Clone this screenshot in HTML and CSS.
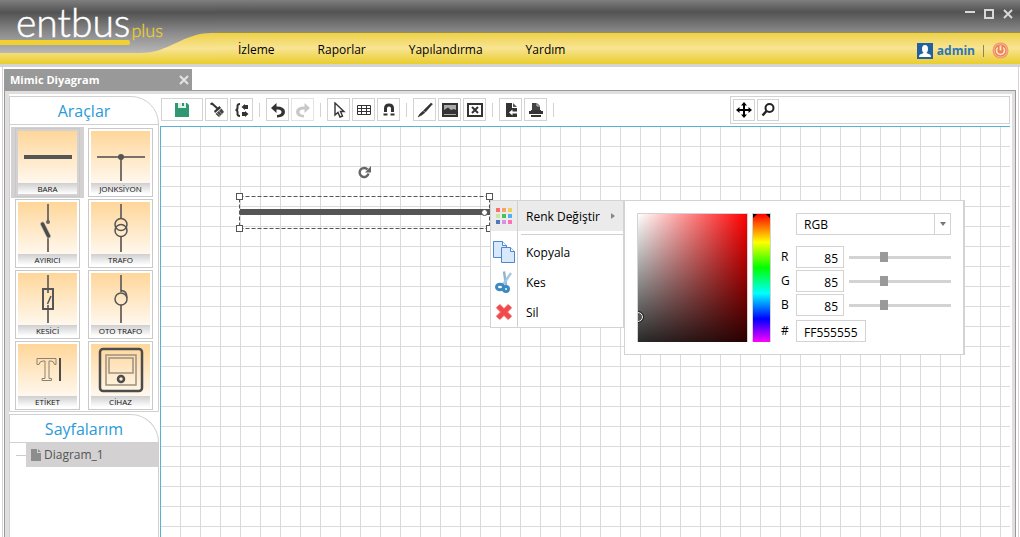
FILE: index.html
```html
<!DOCTYPE html>
<html lang="tr">
<head>
<meta charset="utf-8">
<title>entbus plus - Mimic Diyagram</title>
<link rel="stylesheet" href="styles.css">
</head>
<body>
<div class="app">
  <header class="header">
    <svg class="header-curve" width="216" height="64" viewBox="0 0 216 64" aria-hidden="true">
      <defs>
        <linearGradient id="steel" gradientUnits="userSpaceOnUse" x1="0" y1="0" x2="0" y2="54">
          <stop offset="0" stop-color="#7e7e7e"/><stop offset=".23" stop-color="#535353"/>
          <stop offset=".6" stop-color="#8a8a8a"/><stop offset="1" stop-color="#b9b9b9"/>
        </linearGradient>
        <linearGradient id="gold" gradientUnits="userSpaceOnUse" x1="0" y1="33" x2="0" y2="64">
          <stop offset="0" stop-color="#eed047"/><stop offset=".5" stop-color="#f8e494"/><stop offset="1" stop-color="#e9cd2c"/>
        </linearGradient>
      </defs>
      <path d="M0 53H140C170 53 182 33 212 33H216V64H0Z" fill="url(#gold)"/>
      <path d="M0 0H216V33H212C182 33 170 53 140 53H0Z" fill="url(#steel)"/>
    </svg>
    <div class="logo">
      <div class="logo-text"><span class="logo-name">entbus</span><span class="logo-plus">plus</span></div>
      <div class="logo-bar"></div>
    </div>
    <div class="header-main">
      <div class="window-buttons">
        <button aria-label="Simge durumuna küçült"><svg width="10" height="10"><path d="M0 3H10" stroke="#d8d8d8" stroke-width="2"/></svg></button>
        <button aria-label="Ekranı kapla"><svg width="10" height="10"><rect x="1" y="1" width="8" height="8" fill="none" stroke="#d8d8d8" stroke-width="2"/></svg></button>
        <button aria-label="Kapat"><svg width="10" height="10"><path d="M1 1L9 9M9 1L1 9" stroke="#d8d8d8" stroke-width="2"/></svg></button>
      </div>
      <div class="menu-row">
        <nav class="main-nav">
          <a href="#izleme">İzleme</a><a href="#raporlar">Raporlar</a><a href="#yapilandirma">Yapılandırma</a><a href="#yardim">Yardım</a>
        </nav>
        <div class="user">
          <a href="#admin" class="user-link">
            <svg width="16" height="16" viewBox="0 0 16 16"><rect width="16" height="16" fill="#2161a0"/><ellipse cx="8" cy="6" rx="3" ry="4" fill="#fff"/><path d="M6.500 8H9.500V10L13 11.500Q14 12 14 14H2Q2 12 3 11.500L6.500 10Z" fill="#fff"/></svg>
            admin</a>
          <span class="user-sep"></span>
          <button aria-label="Oturumu kapat"><svg width="17" height="17" viewBox="0 0 17 17"><circle cx="8.500" cy="8.500" r="8" fill="#f2956c"/><circle cx="8.500" cy="8.500" r="6.500" fill="#ee7f50" stroke="#f7b596"/><path d="M5.800 5.500A4 4 0 1 0 11.200 5.500" fill="none" stroke="#ffe8c8" stroke-width="1.600"/><path d="M8.500 3.500V8.500" stroke="#ffe8c8" stroke-width="1.800"/></svg></button>
        </div>
      </div>
    </div>
  </header>

  <div class="frame">
    <div class="tabs">
      <div class="tab"><span>Mimic Diyagram</span><button aria-label="Sekmeyi kapat"><svg width="10" height="10"><path d="M1 1L9 9M9 1L1 9" stroke="#e4e4e4" stroke-width="2"/></svg></button></div>
    </div>
    <div class="workspace">
      <aside class="sidebar">
        <section class="box">
          <h2>Araçlar</h2>
          <div class="tools">
            <button class="tool selected"><svg viewBox="0 0 59 52"><path d="M6 26H54" stroke="#555" stroke-width="4"/></svg><span>BARA</span></button>
            <button class="tool"><svg viewBox="0 0 59 52"><path d="M6 26H54M30 26V50" stroke="#77716a" stroke-width="2"/><circle cx="30" cy="26" r="3" fill="#555"/></svg><span>JONKSİYON</span></button>
            <button class="tool"><svg viewBox="0 0 59 52"><path d="M30 2V20M30 36V50" stroke="#77716a" stroke-width="2"/><circle cx="30" cy="20" r="2" fill="#666"/><path d="M24.500 22L30.500 34" stroke="#c9c3b8" stroke-width="5" stroke-linecap="round"/><path d="M24.500 22L30.500 34" stroke="#4c4c4c" stroke-width="3.500" stroke-linecap="round"/></svg><span>AYIRICI</span></button>
            <button class="tool"><svg viewBox="0 0 59 52" fill="none"><path d="M30 2V16M30 35V50" stroke="#77716a" stroke-width="2"/><circle cx="30" cy="22.500" r="6" stroke="#555" stroke-width="1.500"/><circle cx="30" cy="28.500" r="6" stroke="#555" stroke-width="1.500"/></svg><span>TRAFO</span></button>
            <button class="tool"><svg viewBox="0 0 59 52" fill="none"><path d="M30 2V20M30 32V50" stroke="#77716a" stroke-width="2"/><rect x="25" y="16" width="10" height="20" stroke="#555" stroke-width="2"/><path d="M33 23L29.500 31" stroke="#555" stroke-width="1.500"/></svg><span>KESİCİ</span></button>
            <button class="tool"><svg viewBox="0 0 59 52" fill="none"><path d="M30 2V19M30 32V50" stroke="#77716a" stroke-width="2"/><circle cx="30" cy="26" r="6" stroke="#555" stroke-width="1.500"/><path d="M30 17.500Q36 17.500 36 25" stroke="#555" stroke-width="1.500"/></svg><span>OTO TRAFO</span></button>
            <button class="tool"><svg viewBox="0 0 59 52" fill="none"><path d="M19 14.500H38V20.500H36.500Q36 17 33 17H31V34.500H33.500V36.500H24V34.500H27V17H25Q21.500 17 21 20.500H19Z" stroke="#8b8172"/><path d="M42 14V37" stroke="#4c4c4c" stroke-width="2"/></svg><span>ETİKET</span></button>
            <button class="tool"><svg viewBox="0 0 59 52" fill="none"><rect x="9" y="5" width="42" height="42" rx="3" stroke="#4c4c4c" stroke-width="2.500"/><rect x="15" y="11" width="30" height="30" stroke="#9b9181" stroke-width="1.500"/><rect x="18" y="14" width="24" height="15" stroke="#9b9181" stroke-width="1.500"/><circle cx="30" cy="35" r="3" stroke="#4c4c4c" stroke-width="2.500"/></svg><span>CİHAZ</span></button>
          </div>
        </section>
        <section class="box pages">
          <h2>Sayfalarım</h2>
          <div class="tree"><span class="tree-line"></span><a href="#diagram1" class="tree-item"><svg width="10" height="12"><path d="M0 0H6V4H10V12H0Z" fill="#8d8d8d"/><path d="M7 0L10 3H7Z" fill="#8d8d8d"/></svg>Diagram_1</a></div>
        </section>
      </aside>

      <main class="editor">
        <div class="toolbar">
          <div class="tool-strip">
            <button class="tb save" aria-label="Kaydet"><svg viewBox="0 0 16 16"><path d="M1 1H13L15 3V15H1Z" fill="#2f9872"/><path d="M4 1H12V6H4Z" fill="#dff1ea"/><path d="M8 1H10V4H8Z" fill="#2f9872"/></svg></button>
            <button class="tb" aria-label="Biçim fırçası"><svg viewBox="0 0 16 16"><path d="M1.500 2.500L3 1.500L8.500 6.500" fill="none" stroke="#333" stroke-width="2"/><path d="M5 9L10.500 4L12 6L6 11Z" fill="#333"/><path d="M6.500 12L12.500 6.500L15 10L10 15Z" fill="#444"/><path d="M8 11L11.500 14M10 9L13 12.500" stroke="#bbb" stroke-width=".7"/></svg></button>
            <button class="tb" aria-label="Kod yerleşimi"><svg viewBox="0 0 16 16"><path d="M6 2Q3.500 2 3.500 4V6Q3.500 8 1.500 8Q3.500 8 3.500 10V12Q3.500 14 6 14" fill="none" stroke="#333" stroke-width="2"/><path d="M7.500 5L11 2V3H14V7H11V8ZM14.500 12L11 9V10H8V14H11V15Z" fill="#333"/></svg></button>
            <span class="sep"></span>
            <button class="tb" aria-label="Geri al"><svg viewBox="0 0 16 16"><path d="M6.500 1L1 6L6.500 11V7.500Q11.500 7 11.500 10Q11.500 12.500 7 13V15.500Q15 15 15 10Q15 4.500 6.500 4.500Z" fill="#333"/></svg></button>
            <button class="tb" aria-label="Yinele" disabled><svg viewBox="0 0 16 16"><path d="M9.500 1L15 6L9.500 11V7.500Q4.500 7 4.500 10Q4.500 12.500 9 13V15.500Q1 15 1 10Q1 4.500 9.500 4.500Z" fill="#c8c8c8"/></svg></button>
            <span class="sep"></span>
            <button class="tb" aria-label="Seç"><svg viewBox="0 0 16 16"><path d="M4 1V13L7 10.500L9 15L11.500 14L9.500 9.500H13Z" fill="#fff" stroke="#333" stroke-width="1.400"/></svg></button>
            <button class="tb" aria-label="Izgara"><svg viewBox="0 0 16 16" fill="none" stroke="#333"><path d="M1.500 3.500H14.500V12.500H1.500ZM1.500 6.500H14.500M1.500 9.500H14.500M5.500 3.500V12.500M10.500 3.500V12.500"/></svg></button>
            <button class="tb" aria-label="Izgaraya yapıştır"><svg viewBox="0 0 16 16"><path d="M4.500 10V6.500Q4.500 3 8 3Q11.500 3 11.500 6.500V10" fill="none" stroke="#333" stroke-width="3"/><path d="M2.500 11.500H6.500V13.500H2.500ZM9.500 11.500H13.500V13.500H9.500Z" fill="#333"/></svg></button>
            <span class="sep"></span>
            <button class="tb" aria-label="Fırça"><svg viewBox="0 0 16 16"><path d="M14 1L15.500 2L8.500 10L6.500 8.500ZM6 9L8 10.500Q5 13.500 1 15Q3 11 6 9Z" fill="#333" stroke="#333" stroke-width=".5"/></svg></button>
            <button class="tb" aria-label="Resim"><svg viewBox="0 0 16 16"><rect x="1" y="2" width="14" height="12" fill="#aaa" stroke="#333" stroke-width="2"/><path d="M2 8L6 5.500L9 8L12 7L14 8V12H2Z" fill="#333"/></svg></button>
            <button class="tb" aria-label="Resmi kaldır"><svg viewBox="0 0 16 16" fill="none" stroke="#333" stroke-width="2"><rect x="1" y="2" width="14" height="12"/><path d="M5 5L11 11M11 5L5 11"/></svg></button>
            <span class="sep"></span>
            <button class="tb" aria-label="Dışa aktar"><svg viewBox="0 0 16 16"><path d="M3 1H9V6H14V15H3Z" fill="#333"/><path d="M10 1L14 5H10Z" fill="#555"/><path d="M6 10.500L9.500 7.500V9.500H14V11.500H9.500V13.500Z" fill="#fff"/></svg></button>
            <button class="tb" aria-label="Yazdır"><svg viewBox="0 0 16 16"><path d="M4 1H9L12 4V9H4Z" fill="#444"/><path d="M9 1V4H12" fill="none" stroke="#ccc"/><path d="M1 9H3V8H13V9H15V12H1ZM3 13H13V15H3Z" fill="#333"/></svg></button>
            <span class="sep"></span>
          </div>
          <div class="view-strip">
            <button class="tb" aria-label="Taşı"><svg viewBox="0 0 16 16"><path d="M8 2V14M2 8H14" stroke="#000" stroke-width="2"/><path d="M8 0L11 3.500H5ZM8 16L5 12.500H11ZM0 8L3.500 5V11ZM16 8L12.500 5V11Z"/></svg></button>
            <button class="tb" aria-label="Yakınlaştır"><svg viewBox="0 0 16 16" fill="none" stroke="#222"><circle cx="9.500" cy="6" r="4" stroke-width="2"/><path d="M6.500 9L2.500 13.500" stroke-width="2.500"/></svg></button>
          </div>
        </div>

        <div class="canvas">
          <svg class="shape" width="262" height="72" viewBox="0 0 262 72">
            <path d="M134.500 12.500A4.500 4.500 0 1 1 133.500 8.500" fill="none" stroke="#666" stroke-width="2.500"/><path d="M137 5V11.500H131Z" fill="#666"/>
            <rect x="5.500" y="35.500" width="250" height="32" fill="none" stroke="#555" stroke-dasharray="4 2"/>
            <path d="M6 51H256" stroke="#555" stroke-width="6"/>
            <circle cx="250.500" cy="51.500" r="3" fill="#fff" stroke="#444"/>
            <g fill="#fff" stroke="#555"><rect x="2.500" y="32.500" width="6" height="6"/><rect x="252.500" y="32.500" width="6" height="6"/><rect x="2.500" y="64.500" width="6" height="6"/><rect x="252.500" y="64.500" width="6" height="6"/></g>
          </svg>

          <div class="context">
            <div class="context-menu" role="menu">
              <button class="item active" role="menuitem"><span class="item-icon"><svg width="16" height="16"><path fill="#fa6f6f" d="M0 0h4v4h-4z"/><path fill="#fba168" d="M6 0h4v4h-4z"/><path fill="#f0cf55" d="M12 0h4v4h-4z"/><path fill="#cde3a0" d="M0 6h4v4h-4z"/><path fill="#47c35c" d="M6 6h4v4h-4z"/><path fill="#59aef0" d="M12 6h4v4h-4z"/><path fill="#5178b8" d="M0 12h4v4h-4z"/><path fill="#d892e3" d="M6 12h4v4h-4z"/><path fill="#fa73b4" d="M12 12h4v4h-4z"/></svg></span><span class="item-text">Renk Değiştir</span><svg class="item-arrow" width="4" height="6"><path d="M0 0L4 3L0 6Z" fill="#888"/></svg></button>
              <div class="item-gap"><span class="item-icon"></span><span class="item-rule"></span></div>
              <button class="item" role="menuitem"><span class="item-icon"><svg width="22" height="22" viewBox="0 0 22 22" fill="#d9e9fb" stroke="#4b86cf"><path d="M.500 .500H9.500L13.500 4.500V16.500H.500Z"/><path d="M9.500 .500V4.500H13.500" fill="#fff"/><path d="M8.500 6.500H17.500L21.500 10.500V21.500H8.500Z"/><path d="M17.500 6.500V10.500H21.500" fill="#fff"/></svg></span><span class="item-text">Kopyala</span></button>
              <button class="item" role="menuitem"><span class="item-icon"><svg width="18" height="22" viewBox="0 0 18 22" fill="none"><path d="M9 .5L11 14" stroke="#8fb6d0" stroke-width="2.500"/><path d="M16 2L7 15" stroke="#a9c8dc" stroke-width="2.500"/><ellipse cx="5" cy="16" rx="3.500" ry="2.800" stroke="#3d8ac2" stroke-width="3"/><ellipse cx="11" cy="18" rx="2.500" ry="2.500" stroke="#3d8ac2" stroke-width="3"/></svg></span><span class="item-text">Kes</span></button>
              <button class="item" role="menuitem"><span class="item-icon"><svg width="18" height="18" viewBox="0 0 18 18"><path d="M3 3L15 15M15 3L3 15" stroke="#f59090" stroke-width="6"/><path d="M3 3L15 15M15 3L3 15" stroke="#f14a4a" stroke-width="4.500"/></svg></span><span class="item-text">Sil</span></button>
            </div>
            <form class="picker">
              <div class="palette"><span class="palette-mark"></span></div>
              <div class="hue"><span></span><span></span></div>
              <div class="fields">
                <div class="mode"><select aria-label="Renk modeli"><option>RGB</option></select><span class="mode-arrow"><svg width="6" height="4"><path d="M0 0H6L3 4Z" fill="#777"/></svg></span></div>
                <div class="channel"><label for="r">R</label><input id="r" type="text" value="85"><input type="range" min="0" max="255" value="85" aria-label="R kaydırıcı"></div>
                <div class="channel"><label for="g">G</label><input id="g" type="text" value="85"><input type="range" min="0" max="255" value="85" aria-label="G kaydırıcı"></div>
                <div class="channel"><label for="b">B</label><input id="b" type="text" value="85"><input type="range" min="0" max="255" value="85" aria-label="B kaydırıcı"></div>
                <div class="channel hex"><label for="hex">#</label><input id="hex" type="text" value="FF555555"></div>
              </div>
            </form>
          </div>
        </div>
      </main>
    </div>
  </div>
</div>
</body>
</html>
```
FILE: styles.css
```css
* { box-sizing: border-box; }
body { margin: 0; font: 12px/16px "Open Sans", "Noto Sans", sans-serif; color: #000; background: #fff; }
button { font: inherit; color: inherit; background: none; border: 0; padding: 0; margin: 0; }
a { color: inherit; text-decoration: none; }
svg { display: block; flex: none; }
.app { height: 100vh; display: flex; flex-direction: column; overflow: hidden; }

.header { position: relative; flex: none; display: flex; height: 64px;
  background: linear-gradient(#7e7e7e 0, #535353 12px, #8a8a8a 32px, #9a9148 32px, #9a9148 33px, #eed047 33px, #f8e494 48px, #e9cd2c 64px); }
.header-curve { position: absolute; left: 0; top: 0; }
.logo { position: relative; flex: none; width: 238px; padding-top: 3px; }
.logo-text { display: flex; align-items: baseline; gap: 1px; padding-left: 16px; height: 37px; line-height: 38px; font-family: Lato, sans-serif; font-weight: 300; }
.logo-name { font-size: 39px; color: #fff; -webkit-text-stroke: 0.5px #fff; }
.logo-plus { font-size: 18px; color: #ecd02c; -webkit-text-stroke: 0.3px #ecd02c; }
.logo-bar { width: 130px; height: 5px; background: #f0d130; border-radius: 0 2px 2px 0; }
.header-main { position: relative; flex: 1; display: flex; flex-direction: column; }
.window-buttons { display: flex; justify-content: flex-end; gap: 9px; height: 33px; padding: 9px 7px 0 0; align-items: flex-start; }
.menu-row { flex: 1; display: flex; justify-content: space-between; align-items: center; padding: 2px 11px 0 0; }
.main-nav { display: flex; gap: 43px; }
.user { display: flex; align-items: center; gap: 8px; padding-top: 2px; }
.user-link { display: flex; align-items: center; gap: 4px; color: #2a76b5; font-weight: 700; }
.user-sep { width: 1px; height: 12px; background: #8b845c; }

.frame { flex: 1; display: flex; flex-direction: column; min-height: 0; border-top: 3px solid #d5d3d3; padding: 0 1px 0 2px; }
.tabs { padding: 2px 0 0 1px; border: solid #d5d3d3; border-width: 0 1px; }
.tab { display: flex; align-items: center; justify-content: space-between; width: 188px; height: 21px; padding: 1px 3px 0 6px; background: #999; color: #fff; font-weight: 700; font-size: 11px; }
.workspace { flex: 1; display: flex; min-height: 0; gap: 1px; padding: 0 2px 0 1px; border: solid #d5d3d3; border-width: 0 1px; }
.sidebar { flex: none; display: flex; flex-direction: column; gap: 2px; width: 155px; padding: 5px 0 0 4px; border: solid #999; border-width: 1px 0 0 1px; box-shadow: inset 4px 3px #e0dede; }
.box { border: 1px solid #d0d0d0; border-radius: 0 28px 0 0; }
.box h2 { margin: 0; height: 28px; border-bottom: 1px solid #d0d0d0; font-weight: 400; font-size: 16px; line-height: 28px; text-align: center; color: #2a9bd8; }
.tools { display: grid; grid-template-columns: 65px 65px; gap: 2px 8px; padding: 3px 0 1px 5px; }
.tool { display: flex; flex-direction: column; height: 69px; padding: 2px; border: 1px solid #c9c9c9; background: #fff; font-size: 8px; line-height: 11px; color: #111; }
.tool svg { width: 59px; height: 52px; background: linear-gradient(#ffd699, #fff8ee); }
.tool span { width: 100%; height: 11px; background: linear-gradient(#cfcfcf, #fff); }
.tool.selected { background: #d3d1d1; box-shadow: -4px 0 #d3d1d1, 4px 0 #d3d1d1, -4px -1px #d3d1d1, 4px 1px #d3d1d1, -4px 1px #d3d1d1, 4px -1px #d3d1d1; }
.pages { flex: 1; border-bottom: 0; }
.tree { display: flex; align-items: center; padding-left: 6px; }
.tree-line { width: 10px; height: 1px; background: #ccc; }
.tree-item { flex: 1; display: flex; align-items: center; gap: 3px; height: 24px; padding-left: 5px; background: #d3d1d1; color: #555; }

.editor { flex: 1; display: flex; flex-direction: column; min-width: 0; border: solid #999; border-width: 1px 1px 0 0; box-shadow: inset -3px 3px #e0dede; padding: 5px 5px 0 0; margin-left: -1px; }
.toolbar { display: flex; justify-content: space-between; height: 30px; padding-left: 2px; }
.tool-strip { display: flex; align-items: flex-start; gap: 2px; padding-top: 2px; }
.tb { display: grid; place-items: center; width: 23px; height: 23px; border: 1px solid #d3d3d3; background: #fff; }
.tb svg { width: 16px; height: 16px; }
.tb.save { width: 42px; }
.tb:disabled { border-color: #e3e3e3; }
.sep { width: 1px; height: 14px; margin: 5px 4px 0; background: #d3d3d3; }
.view-strip { display: flex; gap: 2px; flex: 0 1 280px; height: 28px; padding: 2px; border: 1px solid #d3d3d3; }
.view-strip .tb { width: 22px; height: 22px; }

.canvas { position: relative; flex: 1; margin-left: 1px; border: solid #5ab1d8; border-width: 1px 0 0 1px;
  background: linear-gradient(90deg, #dadada 1px, transparent 1px) 19px 0 / 20px 20px, linear-gradient(#dadada 1px, transparent 1px) 0 19px / 20px 20px; }
.shape { position: absolute; left: 73px; top: 34px; }
.context { position: absolute; left: 329px; top: 73px; display: flex; align-items: flex-start; }
.context-menu { width: 134px; border: 1px solid #d3d3d3; background: #fff; }
.item { display: flex; align-items: center; width: 100%; height: 30px; text-align: left; }
.item.active { background: #ebebeb; }
.item-icon { flex: none; display: grid; place-items: center; width: 27px; height: 100%; border-right: 1px solid #d0d0d0; }
.item-text { flex: 1; padding: 2px 0 0 8px; white-space: nowrap; }
.item-arrow { margin-right: 8px; }
.item-gap { display: flex; align-items: center; height: 6px; }
.item-rule { flex: 1; height: 1px; margin-left: 3px; background: #d0d0d0; }
.picker { display: flex; gap: 4px; width: 341px; padding: 12px; border: 1px solid #d3d3d3; border-right-width: 2px; background: #fff; }
.palette { position: relative; flex: none; overflow: hidden; width: 111px; height: 129px; border: 1px solid #d3d3d3; border-bottom: 0;
  background: linear-gradient(rgb(0 0 0 / 0), rgb(0 0 0 / .84)), linear-gradient(90deg, #fff, #f00); }
.palette-mark { position: absolute; left: -5px; top: 98px; width: 10px; height: 10px; border: 1px solid #fff; outline: 1px solid #222; border-radius: 50%; background: #555; }
.hue { flex: none; display: flex; justify-content: space-between; width: 19px; height: 129px; border: 1px solid #d3d3d3; border-bottom: 0; background: linear-gradient(#f00, #ff0 22%, #0f0 42%, #0ff 62%, #00f 82%, #f0f); }
.hue span { border: 2px solid transparent; border-left-color: #000; border-top-color: #000; height: 4px; }
.hue span + span { border-left-color: transparent; border-right-color: #000; }
.fields { flex: 1; min-width: 0; display: flex; flex-direction: column; gap: 2px; padding-left: 6px; }
.fields input[type=text], .fields select { font: inherit; color: #000; border: 1px solid #d3d3d3; background: #fff; height: 22px; }
.mode { display: flex; height: 22px; margin: 0 0 9px 15px; }
.mode select { flex: 1; appearance: none; padding: 1px 7px 0; border-radius: 0; }
.mode-arrow { display: grid; place-items: center; width: 16px; border: 1px solid #d3d3d3; border-left: 0; pointer-events: none; }
.channel { display: flex; align-items: center; height: 22px; }
.channel label { width: 15px; }
.channel input[type=text] { width: 48px; padding: 2px 5px 0; text-align: right; }
.channel.hex { margin-top: 2px; }
.channel.hex input[type=text] { width: 70px; padding: 2px 7px 0; text-align: left; }
.channel input[type=range] { appearance: none; flex: 1; min-width: 0; height: 10px; margin: 0 0 0 5px; background: linear-gradient(#d3d3d3, #d3d3d3) center / 100% 3px no-repeat; }
.channel input[type=range]::-webkit-slider-thumb { appearance: none; width: 8px; height: 10px; background: #999; border: 0; border-radius: 0; }
```
